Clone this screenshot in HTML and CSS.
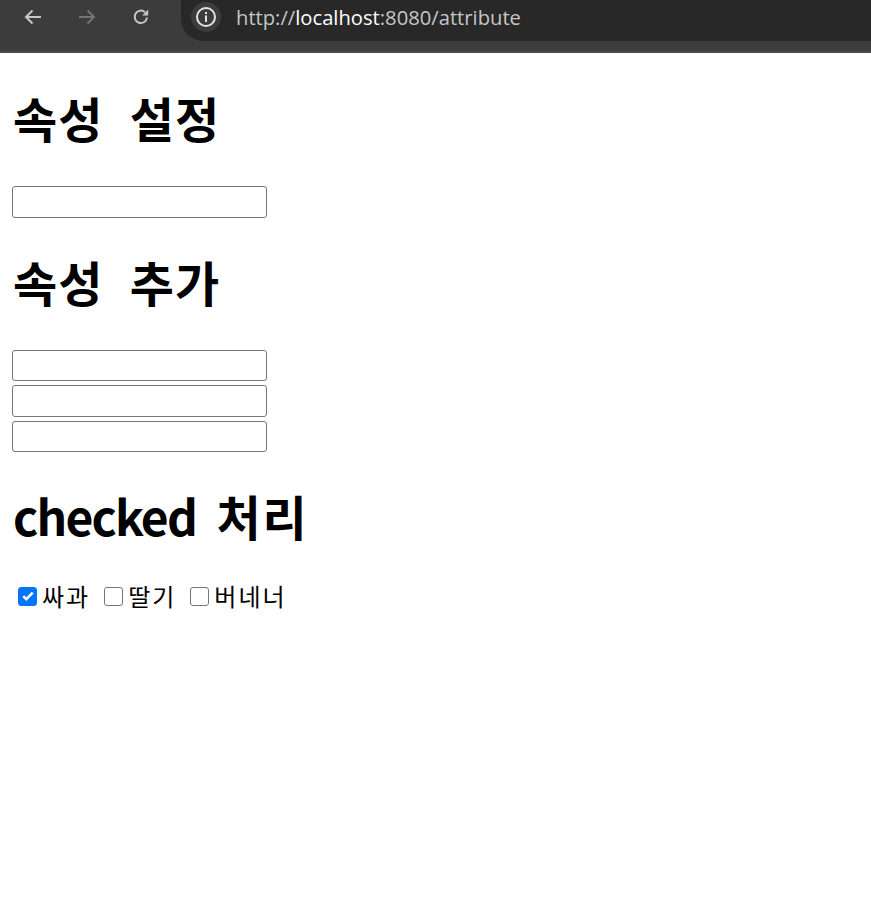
FILE: index.html
```html
<!DOCTYPE html>
<html lang="ko">
<head>
<meta charset="utf-8">
<title>attribute</title>
<link rel="stylesheet" href="styles.css">
</head>
<body>
<header class="chrome">
  <div class="nav">
    <span class="nav-btn">
      <svg width="20" height="20" viewBox="0 0 20 20"><path d="M18 10H3.5M9.5 3.5L3 10l6.5 6.5" fill="none" stroke="#c7c7c7" stroke-width="2"/></svg>
    </span>
    <span class="nav-btn dim">
      <svg width="20" height="20" viewBox="0 0 20 20"><path d="M2 10h14.5M10.5 3.5L17 10l-6.5 6.5" fill="none" stroke="#747474" stroke-width="2"/></svg>
    </span>
    <span class="nav-btn">
      <svg width="20" height="20" viewBox="0 0 20 20"><path d="M16 10.5A6.2 6.2 0 1 1 14 5.2" fill="none" stroke="#c7c7c7" stroke-width="2"/><path d="M17.2 2.5v6h-6z" fill="#c7c7c7"/></svg>
    </span>
  </div>
  <div class="omnibox">
    <span class="site-info">
      <svg width="22" height="22" viewBox="0 0 22 22"><circle cx="11" cy="11" r="9" fill="none" stroke="#e3e3e3" stroke-width="2"/><rect x="10" y="9.5" width="2" height="6.5" fill="#e3e3e3"/><rect x="10" y="6" width="2" height="2" fill="#e3e3e3"/></svg>
    </span>
    <span class="url"><span class="muted">http://</span>localhost<span class="muted">:8080/attribute</span></span>
  </div>
</header>
<main class="page">
  <h1>속성 설정</h1>
  <div class="row"><input type="text" class="field"></div>
  <h1>속성 추가</h1>
  <div class="row"><input type="text" class="field"></div>
  <div class="row"><input type="text" class="field"></div>
  <div class="row"><input type="text" class="field"></div>
  <h1 class="mixed"><span class="latin">checked</span> 처리</h1>
  <div class="checks">
    <label class="check">
      <span class="box on"><svg width="14" height="14" viewBox="0 0 14 14"><path d="M2.3 7.2l3 3 6.4-6.6" fill="none" stroke="#fff" stroke-width="2.6"/></svg></span>
      <span class="lbl">싸과</span>
    </label>
    <label class="check">
      <span class="box"></span>
      <span class="lbl">딸기</span>
    </label>
    <label class="check">
      <span class="box"></span>
      <span class="lbl">버네너</span>
    </label>
  </div>
</main>
</body>
</html>
```

FILE: styles.css
```css
html, body {
  margin: 0;
  padding: 0;
  background: #fff;
}
body {
  font-family: "Noto Sans CJK KR", "Noto Sans", sans-serif;
  color: #000;
}
.chrome {
  height: 51px;
  background: #3c3c3c;
  border-bottom: 2px solid #4b4b4b;
  display: flex;
  align-items: flex-start;
  overflow: hidden;
}
.nav {
  display: flex;
  padding-left: 13px;
  gap: 14px;
  height: 33px;
  align-items: center;
}
.nav-btn {
  width: 40px;
  height: 33px;
  display: flex;
  align-items: center;
  justify-content: center;
}
.omnibox {
  margin-left: 20px;
  flex: 1;
  height: 41px;
  background: #282828;
  border-radius: 0 0 0 22px;
  display: flex;
  align-items: flex-start;
}
.site-info {
  margin: 2px 0 0 10px;
  width: 30px;
  height: 30px;
  border-radius: 50%;
  background: #3c3c3c;
  display: flex;
  align-items: center;
  justify-content: center;
}
.url {
  margin: 2px 0 0 15px;
  font-family: "Open Sans", "Noto Sans", sans-serif;
  font-size: 20.2px;
  line-height: 30px;
  color: #ffffff;
}
.url .muted {
  color: #c6c6c6;
}
.page {
  padding: 0 12px;
  display: flex;
  flex-direction: column;
  align-items: flex-start;
}
h1 {
  font-size: 48px;
  font-weight: 700;
  line-height: 64px;
  margin: 32px 0;
  white-space: nowrap;
  word-spacing: 12px;
  letter-spacing: 1px;
  padding-left: 1px;
}
h1.mixed {
  word-spacing: 5px;
  letter-spacing: 2px;
}
h1 .latin {
  letter-spacing: -1.8px;
}
.row {
  height: 35.5px;
  padding-top: 5px;
  box-sizing: border-box;
}
.field {
  display: block;
  box-sizing: border-box;
  width: 255px;
  height: 31.5px;
  margin: 0;
  border: 1.5px solid #767676;
  border-radius: 3px;
  background: #fff;
  padding: 1px 3px;
  font-size: 20px;
}
.checks {
  display: flex;
  align-items: center;
  height: 34px;
  padding-left: 6px;
  gap: 14px;
}
.check {
  display: flex;
  align-items: center;
  gap: 5px;
}
.box {
  width: 19px;
  height: 19px;
  box-sizing: border-box;
  border: 1.5px solid #767676;
  border-radius: 3px;
  background: #fff;
  display: flex;
  align-items: center;
  justify-content: center;
}
.box.on {
  background: #0075ff;
  border-color: #0075ff;
}
.lbl {
  font-size: 24px;
  line-height: 30px;
  letter-spacing: 2px;
}
```
